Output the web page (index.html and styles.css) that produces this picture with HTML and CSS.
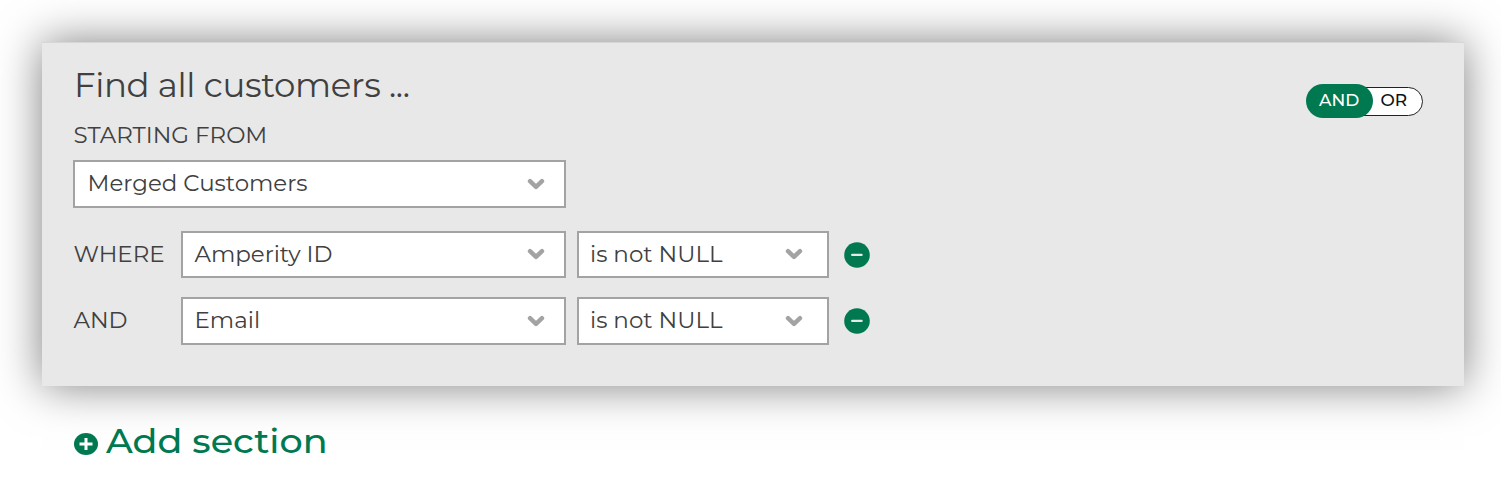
FILE: index.html
```html
<!DOCTYPE html>
<html lang="en">
<head>
<meta charset="utf-8">
<title>Segment editor</title>
<link rel="stylesheet" href="styles.css">
</head>
<body>
<svg class="defs" aria-hidden="true">
  <symbol id="chevron" viewBox="0 0 18 12"><path d="M3 3.2 L9 8.9 L15 3.2" fill="none" stroke="#a3a3a3" stroke-width="4.4" stroke-linecap="round" stroke-linejoin="round"/></symbol>
  <symbol id="minus" viewBox="0 0 26 26"><circle cx="13" cy="13" r="12.8" fill="#007951"/><path d="M8.2 12.9H17.6" stroke="#e8e8e8" stroke-width="2.3" stroke-linecap="round"/></symbol>
</svg>
<main class="panel">
  <div class="head">
    <h1 class="title">Find all customers ...</h1>
    <div class="toggle"><div class="on">AND</div><div class="off">OR</div></div>
  </div>
  <div class="from">STARTING FROM</div>
  <div class="select wide"><span>Merged Customers</span><svg class="chev"><use href="#chevron"/></svg></div>
  <div class="rule">
    <div class="label">WHERE</div>
    <div class="select field"><span>Amperity ID</span><svg class="chev"><use href="#chevron"/></svg></div>
    <div class="select op"><span>is not NULL</span><svg class="chev"><use href="#chevron"/></svg></div>
    <svg class="minus"><use href="#minus"/></svg>
  </div>
  <div class="rule">
    <div class="label">AND</div>
    <div class="select field"><span>Email</span><svg class="chev"><use href="#chevron"/></svg></div>
    <div class="select op"><span>is not NULL</span><svg class="chev"><use href="#chevron"/></svg></div>
    <svg class="minus"><use href="#minus"/></svg>
  </div>
</main>
<div class="add">
  <svg class="plus" viewBox="0 0 24 22"><ellipse cx="12" cy="11" rx="12" ry="11" fill="#007951"/><path d="M5.5 11H18.5M12 5V17" stroke="#fff" stroke-width="3"/></svg>
  <span class="add-text">Add section</span>
</div>
</body>
</html>
```
FILE: styles.css
```css
* { box-sizing: border-box; }
body {
  margin: 0;
  height: 497px;
  padding: 42px 37px 0 42px;
  overflow: hidden;
  background: #fff;
  color: #404040;
  font-family: Montserrat, Inter, sans-serif;
  font-size: 22.95px;
}
.defs { position: absolute; width: 0; height: 0; }
.panel {
  height: 344px;
  padding: 20px 41px 0 31px;
  background: #e8e8e8;
  border-top: 1px solid #d6d6d6;
  box-shadow: 0 0 42px rgba(0, 0, 0, .5);
}
.head { display: flex; justify-content: space-between; height: 57px; }
.title { margin: 0; padding-left: 1px; font-size: 34px; font-weight: 400; letter-spacing: -.35px; line-height: 44px; }
.toggle { display: flex; align-items: center; width: 117px; height: 34px; margin-top: 21px; font-size: 17px; font-weight: 500; }
.on { z-index: 1; width: 67px; height: 34px; padding-left: 13px; border-radius: 17px; background: #007951; color: #fff; line-height: 33px; }
.off { width: 80px; height: 29px; margin-left: -30px; padding-left: 36.5px; border: 1px solid #222; border-radius: 15px; background: #fff; color: #111; line-height: 25px; }
.from { height: 40px; padding-left: .5px; line-height: 31px; }
.select { display: flex; align-items: center; justify-content: space-between; height: 47.5px; padding: 0 19px 1px 12.5px; border: 2px solid #a3a3a3; background: #fff; }
.wide { width: 493px; }
.field { width: 385px; margin-right: 11px; padding-left: 11.5px; }
.op { width: 252px; margin-right: 15px; padding-left: 11px; padding-right: 24px; }
.chev { width: 18px; height: 12px; margin-top: 1px; }
.rule { display: flex; align-items: center; height: 47.5px; margin-top: 23px; }
.rule + .rule { margin-top: 19px; }
.label { width: 108px; padding: 0 0 1px .5px; }
.minus { width: 26px; height: 26px; margin-top: 1px; }
.add { display: flex; align-items: center; gap: 8px; height: 44px; margin: 33px 0 0 32px; color: #007951; font-size: 33.5px; font-weight: 500; }
.plus { width: 24px; height: 22px; margin-top: 5px; }
.add-text { margin-top: -1px; transform: scaleX(1.092); transform-origin: 0 50%; }
```
